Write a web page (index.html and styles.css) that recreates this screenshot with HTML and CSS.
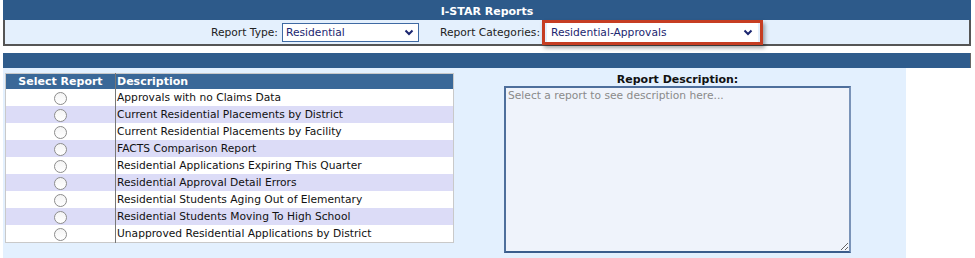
FILE: index.html
```html
<!DOCTYPE html>
<html lang="en">
<head>
<meta charset="UTF-8">
<meta name="viewport" content="width=device-width, initial-scale=1.0">
<title>I-STAR Reports</title>
<link rel="stylesheet" href="styles.css">
</head>
<body>
<div class="page">
  <div class="title-bar">I-STAR Reports</div>
  <div class="filter-bar">
    <label class="field">
      <span>Report Type:</span>
      <span class="select select-type">
        <span>Residential</span>
        <svg width="10" height="7" viewBox="0 0 10 7"><path d="M1.5 1.5 L5 5 L8.5 1.5" fill="none" stroke="#1b2670" stroke-width="2"/></svg>
      </span>
    </label>
    <label class="field">
      <span>Report Categories:</span>
      <span class="highlight">
        <span class="select select-cat">
          <span>Residential-Approvals</span>
          <svg width="10" height="7" viewBox="0 0 10 7"><path d="M1.5 1.5 L5 5 L8.5 1.5" fill="none" stroke="#1b2670" stroke-width="2"/></svg>
        </span>
      </span>
    </label>
  </div>
  <div class="sub-bar"></div>
  <div class="content">
    <div class="list-col">
      <table class="reports">
        <tr>
          <th class="pick">Select Report</th>
          <th class="desc">Description</th>
        </tr>
        <tr><td class="pick"><input type="radio" name="report"></td><td class="desc">Approvals with no Claims Data</td></tr>
        <tr><td class="pick"><input type="radio" name="report"></td><td class="desc">Current Residential Placements by District</td></tr>
        <tr><td class="pick"><input type="radio" name="report"></td><td class="desc">Current Residential Placements by Facility</td></tr>
        <tr><td class="pick"><input type="radio" name="report"></td><td class="desc">FACTS Comparison Report</td></tr>
        <tr><td class="pick"><input type="radio" name="report"></td><td class="desc">Residential Applications Expiring This Quarter</td></tr>
        <tr><td class="pick"><input type="radio" name="report"></td><td class="desc">Residential Approval Detail Errors</td></tr>
        <tr><td class="pick"><input type="radio" name="report"></td><td class="desc">Residential Students Aging Out of Elementary</td></tr>
        <tr><td class="pick"><input type="radio" name="report"></td><td class="desc">Residential Students Moving To High School</td></tr>
        <tr><td class="pick"><input type="radio" name="report"></td><td class="desc">Unapproved Residential Applications by District</td></tr>
      </table>
    </div>
    <div class="desc-col">
      <div class="desc-label">Report Description:</div>
      <textarea class="desc-box" placeholder="Select a report to see description here..."></textarea>
    </div>
  </div>
</div>
</body>
</html>
```

FILE: styles.css
```css
body {
  margin: 0;
  padding: 0;
  font-family: "DejaVu Sans", Verdana, sans-serif;
  font-size: 10.7px;
  color: #111;
  background: #fff;
}
.page {
  width: 968px;
  margin-left: 3px;
}
.title-bar {
  background-color: #2d5a8a;
  color: #fff;
  font-size: 11px;
  font-weight: bold;
  text-align: center;
  height: 20px;
  line-height: 23px;
}
.filter-bar {
  background-color: #e4f0fd;
  border: 2px solid #555;
  border-top: none;
  height: 24px;
  display: flex;
  justify-content: center;
  align-items: center;
  gap: 21px;
}
.field {
  display: flex;
  align-items: center;
  gap: 4px;
  color: #222;
}
.select {
  display: flex;
  align-items: center;
  justify-content: space-between;
  box-sizing: border-box;
  height: 19px;
  padding: 0 4px 0 3px;
  background: #fff;
  border: 1px solid #3f6aa3;
  color: #1b2670;
}
.select-type {
  width: 137px;
}
.select-cat {
  width: 211px;
  border-color: #fff;
}
.highlight {
  display: flex;
  border: 3px solid #c63d22;
  padding: 0 2px;
  margin-left: -2px;
  box-shadow: 2px 3px 4px rgba(0, 0, 0, 0.35);
}
.sub-bar {
  margin-top: 7px;
  height: 15px;
  background-color: #2f5c8c;
  border-right: 1px solid #666;
}
.content {
  width: 903px;
  height: 190px;
  background-color: #e3f0fe;
  display: flex;
}
.list-col {
  width: 450px;
  padding: 5px 0 0 2px;
}
.reports {
  border-collapse: collapse;
  border: 1px solid #c9c9c9;
  width: 449px;
}
.reports th {
  background-color: #3a6898;
  color: #fff;
  font-size: 11px;
  font-weight: bold;
  height: 15px;
  padding: 0;
  text-align: left;
}
.reports th.pick {
  text-align: center;
}
.reports td {
  height: 17px;
  padding: 0;
  background: #fff;
}
.reports tr:nth-child(odd) td {
  background-color: #dcdcf7;
}
.reports .pick {
  width: 109px;
  text-align: center;
  border-right: 1px solid #777;
}
.reports .desc {
  padding-left: 1px;
}
.reports input[type=radio] {
  appearance: none;
  width: 13px;
  height: 13px;
  margin: 2px 0 0 0;
  border: 1px solid #8c8c8c;
  border-radius: 50%;
  background: linear-gradient(#f4f4f4, #fff);
  vertical-align: top;
}
.desc-col {
  flex: 1;
  padding: 5px 6px 0 0;
  display: flex;
  flex-direction: column;
  align-items: center;
}
.desc-label {
  font-size: 11px;
  font-weight: bold;
  height: 13px;
  line-height: 13px;
}
.desc-box {
  box-sizing: border-box;
  width: 347px;
  height: 167px;
  margin: 0;
  padding: 1px 2px;
  border: 2px solid #4e6f9c;
  border-right-color: #7a93b8;
  border-bottom-color: #3b5d8c;
  background-color: #eff3fb;
  font-family: "DejaVu Sans", Verdana, sans-serif;
  font-size: 10.7px;
}
.desc-box::placeholder {
  color: #8a8a8a;
}
```
